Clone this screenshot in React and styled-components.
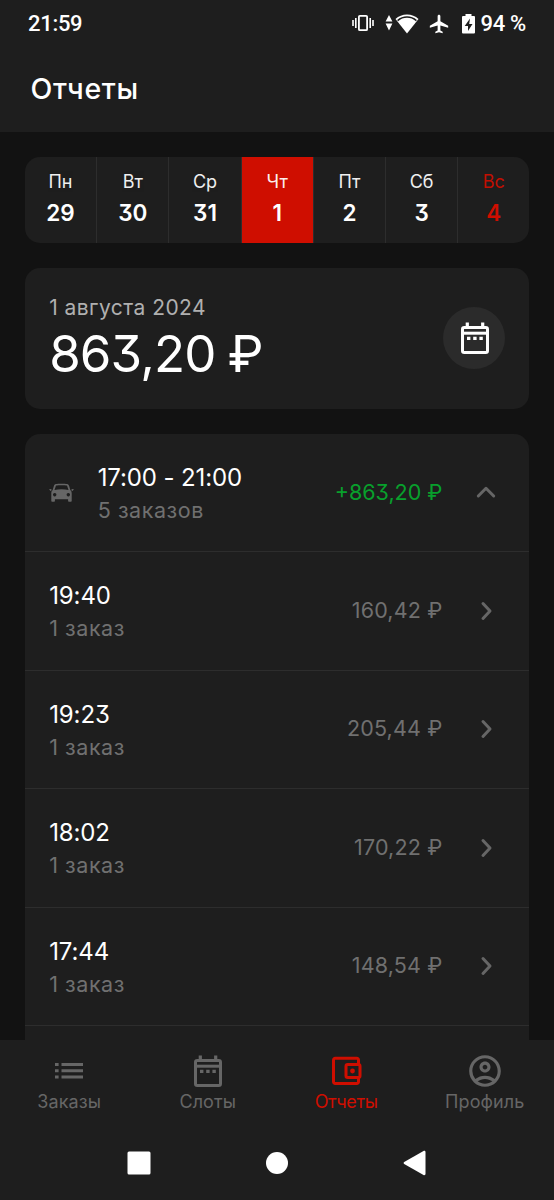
import styled, { createGlobalStyle } from 'styled-components';
import { MdAirplanemodeActive, MdOutlineAccountCircle } from 'react-icons/md';

const palette = {
	page: '#121212',
	panel: '#1e1e1e',
	line: '#2d2d2d',
	round: '#2b2b2b',
	red: '#cf0e00',
	green: '#08a02c',
	white: '#ffffff',
	soft: '#b0b0b0',
	muted: '#707070',
	icon: '#666666'
};

const GlobalStyle = createGlobalStyle`
	* {
		box-sizing: border-box;
	}
	body {
		margin: 0;
		background: ${palette.page};
		color: ${palette.white};
		font-family: Inter, "Noto Sans", sans-serif;
		font-feature-settings: "cv09" 1;
	}
	svg {
		display: block;
		flex: none;
	}
`;

const Screen = styled.div`
	display: flex;
	flex-direction: column;
	height: 1200px;
	overflow: hidden;
`;

const StatusBar = styled.div`
	display: flex;
	align-items: center;
	justify-content: space-between;
	height: 48px;
	padding: 0 28px;
	background: ${palette.panel};
	font-family: Roboto, sans-serif;
	font-weight: 500;
	font-size: 22px;
	line-height: 48px;
`;

const StatusIcons = styled.div`
	display: flex;
	align-items: center;
	height: 48px;
`;

const Clock = styled.span`
	letter-spacing: -0.3px;
`;

const Battery = styled.span`
	margin-left: 6px;
	letter-spacing: -0.3px;
`;

const VibrateIcon = styled.svg`
	margin-top: -2px;
`;

const WifiIcon = styled.svg`
	margin-left: 11px;
`;

const PlaneIcon = styled(MdAirplanemodeActive)`
	margin-left: 9px;
`;

const BatteryIcon = styled.svg`
	margin-left: 12px;
`;

const Header = styled.header`
	flex: none;
	height: 84px;
	padding: 23px 30.5px 0;
	background: ${palette.panel};
	font-size: 28.5px;
	line-height: 36px;
	font-weight: 500;
	letter-spacing: 0.6px;
`;

const Content = styled.main`
	flex: 1;
	min-height: 0;
	overflow: hidden;
	display: flex;
	flex-direction: column;
	gap: 24.6px;
	padding: 25px 24.6px 0;
`;

const Week = styled.div`
	flex: none;
	display: grid;
	grid-template-columns: 71.6px repeat(6, 1fr);
	height: 86px;
	border-radius: 15px;
	overflow: hidden;
	background: ${palette.panel};
`;

const Day = styled.div`
	display: flex;
	flex-direction: column;
	align-items: center;
	padding-top: 12px;
	border-left: 1px solid ${palette.line};
	background: ${({ $active }) => ($active ? palette.red : 'transparent')};
	color: ${({ $holiday }) => ($holiday ? palette.red : palette.white)};
	&:first-child {
		border-left: none;
	}
`;

const DayName = styled.span`
	font-size: 18px;
	line-height: 26px;
	opacity: 0.93;
`;

const DayNumber = styled.span`
	font-size: 22.5px;
	line-height: 35px;
	font-weight: 600;
`;

const Summary = styled.section`
	flex: none;
	display: flex;
	align-items: center;
	justify-content: space-between;
	height: 141.6px;
	padding: 0 24.6px;
	border-radius: 15px;
	background: ${palette.panel};
`;

const SummaryText = styled.div`
	padding-top: 4px;
`;

const SummaryDate = styled.div`
	font-size: 21px;
	line-height: 28px;
	letter-spacing: 0.45px;
	color: ${palette.soft};
`;

const SummaryTotal = styled.div`
	font-size: 51px;
	line-height: 64px;
	letter-spacing: -0.9px;
	word-spacing: -1px;
`;

const RoundButton = styled.button`
	display: flex;
	align-items: center;
	justify-content: center;
	width: 62px;
	height: 62px;
	padding: 0 0 0 2px;
	border: none;
	border-radius: 50%;
	background: ${palette.round};
	color: ${palette.white};
`;

const List = styled.section`
	flex: none;
	padding-bottom: 118px;
	border-radius: 15px;
	background: ${palette.panel};
`;

const Row = styled.div`
	display: flex;
	align-items: center;
	height: 118.45px;
	padding: 0 32px 0 24.6px;
	border-bottom: 1.5px solid ${palette.line};
	color: ${palette.icon};
`;

const RowText = styled.div`
	flex: 1;
	padding-top: 2px;
	margin-left: ${({ $indent }) => ($indent ? '23.5px' : '0')};
`;

const RowTime = styled.div`
	color: ${palette.white};
	font-size: 24px;
	line-height: 33px;
	letter-spacing: -0.12px;
`;

const RowCount = styled.div`
	color: ${palette.muted};
	font-size: 21.5px;
	line-height: 32px;
	letter-spacing: 0.55px;
`;

const Amount = styled.div`
	margin: -2px 33px 0 0;
	color: ${({ $total }) => ($total ? palette.green : palette.muted)};
	font-size: 21.5px;
	letter-spacing: ${({ $total }) => ($total ? '0' : '0.15px')};
`;

const TabBar = styled.nav`
	flex: none;
	display: grid;
	grid-template-columns: repeat(4, 1fr);
	height: 86px;
	background: ${palette.panel};
`;

const Tab = styled.a`
	display: flex;
	flex-direction: column;
	align-items: center;
	padding-top: 12px;
	color: ${({ $active }) => ($active ? palette.red : palette.icon)};
	font-size: 18px;
	line-height: 24px;
	letter-spacing: ${({ $active }) => ($active ? '-0.3px' : '0.1px')};
`;

const SystemNav = styled.div`
	flex: none;
	display: flex;
	align-items: center;
	justify-content: space-between;
	height: 74px;
	padding: 0 128px 0 126.5px;
	background: ${palette.panel};
`;

const StatusGlyphs = () => (
	<>
		<VibrateIcon width="22" height="18" viewBox="0 0 22 18" fill="none" stroke="currentColor">
			<path d="M1 6v6M3.8 4v10M18.2 4v10M21 6v6" strokeWidth="1.6" />
			<rect x="6.9" y="1.8" width="8.2" height="14.4" rx="1" strokeWidth="1.8" />
		</VibrateIcon>
		<WifiIcon width="34" height="20" viewBox="0 0 34 20" fill="currentColor">
			<path d="M4 1l3.4 6.4H.6zM4 16.4L.6 9.6h6.800z" />
			<path d="M22 .6c4.400 0 8.500 1.700 11.500 4.500L22 19.400 10.500 5.100C13.500 2.300 17.600.6 22 .6z" />
			<path d="M12.600 6.600c5.500-4.700 13.300-4.700 18.800 0" fill="none" stroke={palette.panel} strokeWidth="1.500" />
		</WifiIcon>
		<PlaneIcon size={22} />
		<BatteryIcon width="13" height="20" viewBox="0 0 13 20" fill="currentColor">
			<path d="M3.500 2V0h6v2H12a1 1 0 0 1 1 1v15.500a1 1 0 0 1-1 1H1a1 1 0 0 1-1-1V3a1 1 0 0 1 1-1z" />
			<path d="M8 4.500L2.700 12H6v5l4.500-7H7.200z" fill={palette.panel} />
		</BatteryIcon>
	</>
);

const CalendarIcon = () => (
	<svg width="32" height="38" viewBox="0 0 32 38" fill="none" stroke="currentColor">
		<rect x="3.500" y="8.500" width="25" height="25" rx="1.800" strokeWidth="3" />
		<path d="M3 14.200h26" strokeWidth="3" />
		<path d="M8.300 3.500v5M23.700 3.500v5" strokeWidth="3.200" />
		<path d="M8 19.300h3.400M14.200 19.300h3.400M20.400 19.300h3.400" strokeWidth="3.200" />
	</svg>
);

const ListIcon = () => (
	<svg width="32" height="38" viewBox="0 0 32 38" fill="none" stroke="currentColor" strokeWidth="3">
		<path d="M2 12.600h3.600M8.500 12.600H30M2 18.800h3.600M8.500 18.800H30M2 25h3.600M8.500 25H30" />
	</svg>
);

const WalletIcon = () => (
	<svg width="32" height="38" viewBox="-1 0 32 38" fill="none" stroke="currentColor" strokeWidth="3">
		<path d="M27.500 12V8a1.700 1.700 0 0 0-1.700-1.700H4.200A1.700 1.700 0 0 0 2.500 8v21.800a1.700 1.700 0 0 0 1.700 1.700h21.600a1.700 1.700 0 0 0 1.700-1.700V26" />
		<rect x="15" y="12.500" width="14" height="13" rx="1.700" />
		<circle cx="21.500" cy="19" r="2.400" fill="currentColor" stroke="none" />
	</svg>
);

const ProfileIcon = () => (
	<MdOutlineAccountCircle size={38} />
);

const CarIcon = () => (
	<svg width="25" height="20" viewBox="0 0 25 20" fill="currentColor">
		<path fillRule="evenodd" d="M7 1C9 .7 16 .7 18 1c1.300.2 1.900 1 2.200 2.200L21.300 7c.9.8 1.400 1.800 1.400 3.200V18a.8.8 0 0 1-.8.8h-2a.8.8 0 0 1-.8-.8v-1.800H5.900V18a.8.8 0 0 1-.8.8h-2a.8.8 0 0 1-.8-.8v-7.800C2.300 8.800 2.800 7.800 3.700 7l1.100-3.800C5.100 2 5.700 1.200 7 1zM7 2.600L5.500 7c4-.9 10-.9 14 0L18 2.600c-2-.4-9-.4-11 0zM5.700 10a1.700 1.700 0 1 0 .01 0zM19.300 10a1.700 1.700 0 1 0 .01 0z" />
		<path d="M0 6.300l2.200-.3.500 1.200-1.200.8zM25 6.300L22.800 6l-.5 1.200 1.200.8z" />
	</svg>
);

const Chevron = ({ up }) => (
	<svg width="22" height="22" viewBox="0 0 22 22" fill="none" stroke="currentColor" strokeWidth="3" strokeLinecap="round" strokeLinejoin="round">
		<path d={up ? 'M3.300 14L11 6.300l7.700 7.700' : 'M8 3.500l7 7.500-7 7.500'} />
	</svg>
);

const days = [
	{ name: 'Пн', number: 29 },
	{ name: 'Вт', number: 30 },
	{ name: 'Ср', number: 31 },
	{ name: 'Чт', number: 1, active: true },
	{ name: 'Пт', number: 2 },
	{ name: 'Сб', number: 3 },
	{ name: 'Вс', number: 4, holiday: true }
];

const orders = [
	{ time: '19:40', amount: '160,42 ₽' },
	{ time: '19:23', amount: '205,44 ₽' },
	{ time: '18:02', amount: '170,22 ₽' },
	{ time: '17:44', amount: '148,54 ₽' }
];

const tabs = [
	{ label: 'Заказы', Icon: ListIcon },
	{ label: 'Слоты', Icon: CalendarIcon },
	{ label: 'Отчеты', Icon: WalletIcon, active: true },
	{ label: 'Профиль', Icon: ProfileIcon }
];

const App = () => (
	<Screen>
		<GlobalStyle />
		<StatusBar>
			<Clock>21:59</Clock>
			<StatusIcons>
				<StatusGlyphs />
				<Battery>94 %</Battery>
			</StatusIcons>
		</StatusBar>
		<Header>Отчеты</Header>
		<Content>
			<Week>
				{days.map(({ name, number, active, holiday }) => (
					<Day key={name} $active={active} $holiday={holiday}>
						<DayName>{name}</DayName>
						<DayNumber>{number}</DayNumber>
					</Day>
				))}
			</Week>
			<Summary>
				<SummaryText>
					<SummaryDate>1 августа 2024</SummaryDate>
					<SummaryTotal>863,20 ₽</SummaryTotal>
				</SummaryText>
				<RoundButton>
					<CalendarIcon />
				</RoundButton>
			</Summary>
			<List>
				<Row>
					<CarIcon />
					<RowText $indent>
						<RowTime>17:00 - 21:00</RowTime>
						<RowCount>5 заказов</RowCount>
					</RowText>
					<Amount $total>+863,20 ₽</Amount>
					<Chevron up />
				</Row>
				{orders.map(({ time, amount }) => (
					<Row key={time}>
						<RowText>
							<RowTime>{time}</RowTime>
							<RowCount>1 заказ</RowCount>
						</RowText>
						<Amount>{amount}</Amount>
						<Chevron />
					</Row>
				))}
			</List>
		</Content>
		<TabBar>
			{tabs.map(({ label, Icon, active }) => (
				<Tab key={label} $active={active}>
					<Icon />
					{label}
				</Tab>
			))}
		</TabBar>
		<SystemNav>
			<svg width="24" height="24" viewBox="0 0 24 24" fill="#fff">
				<rect x=".5" y=".5" width="23" height="23" rx="1.500" />
			</svg>
			<svg width="22" height="22" viewBox="0 0 22 22" fill="#fff">
				<circle cx="11" cy="11" r="11" />
			</svg>
			<svg width="23" height="26" viewBox="0 0 23 26" fill="#fff">
				<path d="M22.500 2v22c0 1-1 1.500-2 1L1.200 14c-.8-.5-.8-1.500 0-2L20.500 1c1-.5 2 0 2 1z" />
			</svg>
		</SystemNav>
	</Screen>
);

export default App;
